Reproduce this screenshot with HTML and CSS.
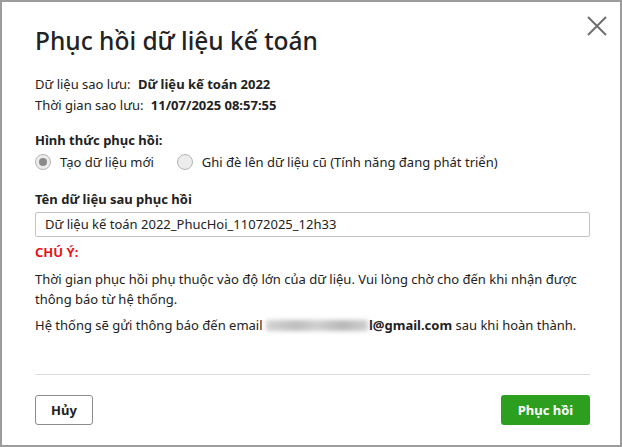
FILE: index.html
```html
<!DOCTYPE html>
<html lang="vi">
<head>
    <meta charset="UTF-8">
    <meta name="viewport" content="width=device-width, initial-scale=1.0">
    <title>Phục hồi dữ liệu kế toán</title>
    <link rel="stylesheet" href="styles.css">
</head>
<body>
    <div class="dialog">
        <button class="close-btn" aria-label="Đóng">
            <svg width="20" height="20" viewBox="0 0 20 20">
                <path d="M1 1 L19 19 M19 1 L1 19" stroke="#6f6f6f" stroke-width="2" fill="none"/>
            </svg>
        </button>

        <h1 class="title">Phục hồi dữ liệu kế toán</h1>

        <div class="info">
            <div class="info-row">Dữ liệu sao lưu: <b>Dữ liệu kế toán 2022</b></div>
            <div class="info-row">Thời gian sao lưu: <b>11/07/2025 08:57:55</b></div>
        </div>

        <div class="label">Hình thức phục hồi:</div>
        <div class="radios">
            <label class="radio">
                <span class="dot checked"></span>
                Tạo dữ liệu mới
            </label>
            <label class="radio">
                <span class="dot"></span>
                Ghi đè lên dữ liệu cũ (Tính năng đang phát triển)
            </label>
        </div>

        <div class="label label-name">Tên dữ liệu sau phục hồi</div>
        <div class="input">Dữ liệu kế toán 2022_PhucHoi_11072025_12h33</div>

        <div class="note-title">CHÚ Ý:</div>
        <p class="note">Thời gian phục hồi phụ thuộc vào độ lớn của dữ liệu. Vui lòng chờ cho đến khi nhận được thông báo từ hệ thống.</p>
        <p class="note">Hệ thống sẽ gửi thông báo đến email <span class="blur"></span><b>l@gmail.com</b> sau khi hoàn thành.</p>

        <div class="footer">
            <button class="btn btn-cancel">Hủy</button>
            <button class="btn btn-ok">Phục hồi</button>
        </div>
    </div>
</body>
</html>
```

FILE: styles.css
```css
body, html {
    margin: 0;
    padding: 0;
    width: 100%;
    height: 100%;
    font-family: 'Noto Sans', sans-serif;
    color: #222;
}

.dialog {
    position: relative;
    box-sizing: border-box;
    width: 622px;
    height: 447px;
    border: 2px solid #9c9c9c;
    background: #fff;
    padding: 0 30px 0 33px;
    font-size: 13px;
}

.close-btn {
    position: absolute;
    top: 14px;
    right: 13px;
    padding: 0;
    border: none;
    background: none;
    width: 20px;
    height: 20px;
}

.title {
    margin: 0;
    padding-top: 21px;
    font-size: 24.5px;
    font-weight: 500;
    line-height: 36px;
}

.info {
    margin-top: 15px;
    line-height: 21px;
}

.info b {
    margin-left: 4px;
}

.label {
    margin-top: 14px;
    font-weight: bold;
    line-height: 20px;
}

.label-name {
    margin-top: 15px;
}

.radios {
    display: flex;
    gap: 23px;
    line-height: 24px;
}

.radio {
    display: flex;
    align-items: center;
    gap: 9px;
}

.dot {
    box-sizing: border-box;
    width: 16px;
    height: 16px;
    border-radius: 50%;
    border: 1px solid #b5b5b5;
    background: #ececec;
    position: relative;
}

.dot.checked::after {
    content: "";
    position: absolute;
    left: 3px;
    top: 3px;
    width: 8px;
    height: 8px;
    border-radius: 50%;
    background: #8a8a8a;
}

.input {
    box-sizing: border-box;
    height: 25px;
    border: 1px solid #c4c4c4;
    border-radius: 2px;
    padding: 0 9px;
    line-height: 23px;
    margin-top: 3px;
}

.note-title {
    margin-top: 5px;
    color: #e8141b;
    font-weight: bold;
    line-height: 20px;
}

.note {
    margin: 7px 0 0;
    line-height: 20px;
}

.note + .note {
    margin-top: 6px;
}

.blur {
    display: inline-block;
    width: 102px;
    height: 11px;
    margin-right: 1px;
    vertical-align: -1px;
    background: linear-gradient(90deg, #d4d4d4, #bdbdbd 30%, #d0d0d0 50%, #b8b8b8 75%, #cfcfcf);
    filter: blur(2px);
}

.footer {
    margin-top: 39px;
    border-top: 1px solid #dcdcdc;
    padding-top: 20px;
    display: flex;
    justify-content: space-between;
}

.btn {
    font-family: 'Noto Sans', sans-serif;
    font-size: 13px;
    font-weight: bold;
    height: 30px;
    border-radius: 3px;
    cursor: pointer;
}

.btn-cancel {
    width: 58px;
    background: #fff;
    color: #222;
    border: 1px solid #8c8c8c;
}

.btn-ok {
    width: 89px;
    background: #2c9f1f;
    color: #fff;
    border: none;
}
```
